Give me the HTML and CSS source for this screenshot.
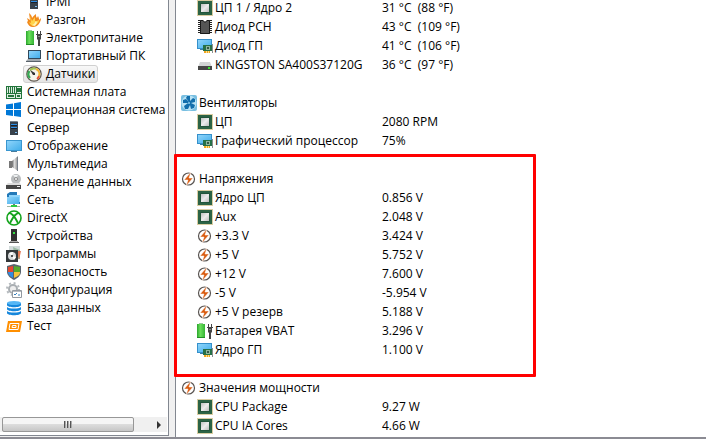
FILE: index.html
```html
<!DOCTYPE html>
<html lang="ru">
<head>
<meta charset="utf-8">
<title>Датчики</title>
<link rel="stylesheet" href="styles.css">
</head>
<body>
<svg class="sprite" aria-hidden="true">
  <defs>
    <linearGradient id="blue" x1="0" y1="0" x2="1" y2="1"><stop offset="0" stop-color="#8ed4fb"/><stop offset="1" stop-color="#43aeea"/></linearGradient>
    <linearGradient id="green" x1="0" x2="1"><stop offset="0" stop-color="#2aa52c"/><stop offset=".4" stop-color="#6be05c"/><stop offset="1" stop-color="#35b335"/></linearGradient>
    <linearGradient id="metal" x1="0" y1="0" x2="1" y2="1"><stop offset="0" stop-color="#c2c2c2"/><stop offset=".5" stop-color="#ececec"/><stop offset="1" stop-color="#bcbcbc"/></linearGradient>
    <linearGradient id="speaker" x1="0" x2="1"><stop offset="0" stop-color="#666"/><stop offset=".4" stop-color="#ddd"/><stop offset="1" stop-color="#888"/></linearGradient>
  </defs>
  <symbol id="i-server" viewBox="0 0 16 16"><path d="M4 1h7l1 1v13H4z" fill="#38424c"/><path d="M4 1h7v1H4z" fill="#77818a"/><path d="M5 4h6v1H5zM5 7h6v1H5z" fill="#2d8ee6"/><path d="M5 5h6v1H5zM5 8h6v1H5z" fill="#18202a"/><path d="M9 12h2v1H9z" fill="#7ec0f4"/></symbol>
  <symbol id="i-fire" viewBox="0 0 16 16"><path d="M3 1c2 2 3 3 3 5 1-1 2-3 4-4 0 2 0 3 1 4l1-2c1 2 1 3 1 4l2-2c0 4-3 9-8 9-3 0-5-2-6-5l1-1-1-3 3 2z" fill="#f28a1c"/><path d="M4 4l2 5 3-4v4l2 0 2-1c0 3-3 5-5 6-3 0-4-2-5-4l2 1z" fill="#ffd34a"/><path d="M10 9l1 2-2 3-3-1 2-1z" fill="#fff2b5"/></symbol>
  <symbol id="i-power" viewBox="0 0 16 16"><path d="M2 0h4v2H2z" fill="#9bc79b"/><path d="M0 1h8v14H0z" fill="url(#green)"/><path d="M0 14h8v1H0z" fill="#218d25"/><path d="M11 1h1v3h-1zM14 1h1v3h-1zM10 4h6v1h-6zM11 5h4v4l-1 1h-2l-1-1zM12 10h2v6h-2z" fill="#444"/><path d="M12 6h2v1h-2z" fill="#888"/></symbol>
  <symbol id="i-laptop" viewBox="0 0 16 16"><path d="M2 2h13v9H2z" fill="#31485a"/><path d="M3 3h11v7H3z" fill="url(#blue)"/><path d="M2 11h12l1 2H0z" fill="#a1a8ad"/><path d="M0 13h15v1H0z" fill="#59636b"/></symbol>
  <symbol id="i-gauge" viewBox="0 0 16 16"><circle cx="8" cy="8" r="7.2" fill="#f6f3e9" stroke="#5c554c" stroke-width="1.2"/><path d="M4 12a5.5 5.5 0 0 1-.5-7" fill="none" stroke="#35a853" stroke-width="2.2"/><path d="M4 4.300a5.500 5.500 0 0 1 6-1.400" fill="none" stroke="#a3c653" stroke-width="2"/><path d="M10 3a5.500 5.500 0 0 1 3 7" fill="none" stroke="#f3b42f" stroke-width="2"/><path d="M13 10a5 5 0 0 1-2 3" fill="none" stroke="#e55332" stroke-width="2"/><path d="M4 4l5 3v2H7z" fill="#333"/></symbol>
  <symbol id="i-board" viewBox="0 0 16 16"><path d="M0 2h16v13H0z" fill="#22753b"/><path d="M1 3h7v6H1zM9 3h1v6H9zM11 3h4v1h-4zM11 8h4v1h-4zM1 10h8v4H1zM10 10h5v4h-5z" fill="#dfebe2"/><path d="M2 3h1v6H2zM4 3h1v6H4zM6 3h1v6H6zM2 11h6v2H2zM11 11h3v2h-3z" fill="#22753b"/></symbol>
  <symbol id="i-windows" viewBox="0 0 16 16"><path d="M0 2.500L7 1.500V7H0zM8 1.300L15 0v7H8zM0 8h7v6L0 13zM8 8h7v7l-7-1z" fill="#0078d7"/></symbol>
  <symbol id="i-display" viewBox="0 0 16 16"><path d="M0 2h16v11H0z" fill="#3996cf"/><path d="M1 3h14v9H1z" fill="url(#blue)"/><path d="M5 13h6v1H5z" fill="#477c9c"/></symbol>
  <symbol id="i-speaker" viewBox="0 0 16 16"><path d="M3 5h3v7H3z" fill="#777"/><path d="M6 5l6-5v15l-6-4z" fill="url(#speaker)"/><path d="M11 1h1v14h-1z" fill="#77808a"/></symbol>
  <symbol id="i-storage" viewBox="0 0 16 16"><circle cx="10" cy="5" r="5" fill="#b9bcbe"/><path d="M10 5L7 1h5z" fill="#edf0f1"/><circle cx="10" cy="5" r="1.500" fill="#fff" stroke="#888"/><path d="M2 9h12l1 2H0z" fill="#ddd"/><path d="M0 11h15v4H0z" fill="#454545"/><path d="M11 12h3v1h-3z" fill="#eee"/></symbol>
  <symbol id="i-network" viewBox="0 0 16 16"><path d="M1 2l3-2h7v3h3v9H1z" fill="#2379b8"/><path d="M3 3h11v7H3z" fill="#8ed4fb"/><path d="M1 5h12v7H1z" fill="url(#blue)"/><path d="M7 12h2v2H7z" fill="#777"/><path d="M1 14h13v1H1z" fill="#a0b5a0"/><path d="M5 13h6v2H5z" fill="#2bca43"/></symbol>
  <symbol id="i-xbox" viewBox="0 0 16 16"><circle cx="8" cy="8" r="7" fill="#fff" stroke="#13a31b" stroke-width="1.600"/><path d="M3 3c3 0 6 4 9 10M13 3c-3 0-6 4-9 10" fill="none" stroke="#13a31b" stroke-width="1.800"/></symbol>
  <symbol id="i-device" viewBox="0 0 16 16"><path d="M5 1h6v12H5z" fill="#303030"/><path d="M7 4h2v2H7z" fill="#35e443"/><path d="M4 13h8v1H4z" fill="#aaa"/><path d="M3 14h10v1H3z" fill="#555"/></symbol>
  <symbol id="i-programs" viewBox="0 0 16 16"><path d="M3 0h11v13H3z" fill="#d1dada"/><path d="M7 1l7 3v9H9z" fill="#9bb9a3"/><path d="M11 5h4l-2 9z" fill="#e37955"/><path d="M0 4h12v12H0z" fill="#34383a"/><circle cx="6" cy="10" r="4" fill="#d8dadb"/><path d="M6 10l-3-3 4-1zM6 10l4 1-2 3z" fill="#fff"/><circle cx="6" cy="10" r="1" fill="#222"/></symbol>
  <symbol id="i-shield" viewBox="0 0 16 16"><path d="M8 0l7 2v6c0 3-3 6-7 8-4-2-7-5-7-8V2z" fill="#58636d"/><path d="M7 2v6H2V3z" fill="#e5482f"/><path d="M8 2l6 1v5H8z" fill="#55aa2b"/><path d="M2 8h5v6C4 12 2 11 2 8z" fill="#328be0"/><path d="M8 8h6c0 3-2 4-6 6z" fill="#f6c338"/></symbol>
  <symbol id="i-config" viewBox="0 0 16 16"><circle cx="7" cy="7" r="6" fill="none" stroke="#b4b9bd" stroke-width="2" stroke-dasharray="2 2.700"/><circle cx="7" cy="7" r="4" fill="#eee" stroke="#a9aeb2" stroke-width="2"/><path d="M6.500 8.500h9v7h-9z" fill="#fff" stroke="#9299a0"/><path d="M7 9h8v1H7z" fill="#b7bbc0"/><path d="M8 12l1 1 2-2M12 13h2" fill="none" stroke="#3681bd"/></symbol>
  <symbol id="i-database" viewBox="0 0 16 16"><path d="M1 3v2c0 3 14 3 14 0V3zM1 7v2c0 3 14 3 14 0V7c-2 2-12 2-14 0zM1 11v2c0 3 14 3 14 0v-2c-2 2-12 2-14 0z" fill="#1687dc"/><ellipse cx="8" cy="3" rx="7" ry="2" fill="#55b6f5"/></symbol>
  <symbol id="i-test" viewBox="0 0 16 16"><path d="M2 3h14l-2 11H0z" fill="#ff8f00"/><path d="M4 5.500h9l-1 6H3zM6.500 7.500h3.500v2H6z" fill="none" stroke="#fff"/></symbol>
  <symbol id="i-cpu" viewBox="0 0 16 16"><path d="M.5.500h15v15H.5z" fill="none" stroke="#b59a45" stroke-dasharray="1 1"/><path d="M1 1h14v14H1z" fill="#2c6345"/><path d="M3 3h10v10H3z" fill="#22553b"/><path d="M4 4h8v8H4z" fill="url(#metal)"/></symbol>
  <symbol id="i-chip" viewBox="0 0 16 16"><path d="M3 1h3l2 2 2-2h3v14H3z" fill="#555"/><path d="M2 1v14M14 1v14" fill="none" stroke="#222" stroke-width="2" stroke-dasharray="1 1"/><path d="M3.500 1.500H6l2 2 2-2h2.500v13h-9z" fill="none" stroke="#191919"/></symbol>
  <symbol id="i-gpu" viewBox="0 0 16 16"><path d="M0 1h15v10H0z" fill="#3590cb"/><path d="M1 2h13v8H1z" fill="url(#blue)"/><path d="M3 11h4v1H3z" fill="#3a7ba3"/><path d="M6 7h9v6H6z" fill="#267047"/><path d="M9 8h4v4H9z" fill="#8db59c"/><path d="M10 9h2v2h-2z" fill="#345845"/><path d="M15 6h1v9h-1z" fill="#8a9090"/><path d="M7 13h6v2H7z" fill="#f0a51e"/><path d="M9 13h1v2H9zM11 13h1v2h-1z" fill="#ffe08a"/></symbol>
  <symbol id="i-drive" viewBox="0 0 16 16"><path d="M3 5h10l2 5H1z" fill="#d2d4d5"/><path d="M1 9h14v4H1z" fill="#464646"/><path d="M11 10h2v2h-2z" fill="#36e52e"/></symbol>
  <symbol id="i-fan" viewBox="0 0 16 16"><rect width="16" height="16" rx="2" fill="#79bfe1"/><circle cx="8" cy="8" r="7.500" fill="#b8e2f4"/><path d="M8 7L5 3l1-2h3v5l3-3 2 1v3l-4 1 4 2-1 3-3 1-1-4-2 4-3 0-1-3 4-3-5 0V5l3-1z" fill="#116eac"/><circle cx="8" cy="8" r="1" fill="#8bcdec"/></symbol>
  <symbol id="i-volt" viewBox="0 0 16 16"><circle cx="7.500" cy="8" r="6" fill="#fff" stroke="#5a5552" stroke-width="1.200"/><path d="M10 1L3 9h4l-2 6 7-8H8z" fill="#da5d12" stroke="#fff" stroke-width=".5"/></symbol>
</svg>
<main class="window">
  <nav class="tree" aria-label="Разделы">
    <ul class="tree-list">
      <li class="sub"><a href="#"><svg><use href="#i-server"/></svg>IPMI</a></li>
      <li class="sub"><a href="#"><svg><use href="#i-fire"/></svg>Разгон</a></li>
      <li class="sub"><a href="#"><svg><use href="#i-power"/></svg>Электропитание</a></li>
      <li class="sub"><a href="#"><svg><use href="#i-laptop"/></svg>Портативный ПК</a></li>
      <li class="sub"><a href="#" class="selected" aria-current="page"><svg><use href="#i-gauge"/></svg>Датчики</a></li>
      <li><a href="#"><svg><use href="#i-board"/></svg>Системная плата</a></li>
      <li><a href="#"><svg><use href="#i-windows"/></svg>Операционная система</a></li>
      <li><a href="#"><svg><use href="#i-server"/></svg>Сервер</a></li>
      <li><a href="#"><svg><use href="#i-display"/></svg>Отображение</a></li>
      <li><a href="#"><svg><use href="#i-speaker"/></svg>Мультимедиа</a></li>
      <li><a href="#"><svg><use href="#i-storage"/></svg>Хранение данных</a></li>
      <li><a href="#"><svg><use href="#i-network"/></svg>Сеть</a></li>
      <li><a href="#"><svg><use href="#i-xbox"/></svg>DirectX</a></li>
      <li><a href="#"><svg><use href="#i-device"/></svg>Устройства</a></li>
      <li><a href="#"><svg><use href="#i-programs"/></svg>Программы</a></li>
      <li><a href="#"><svg><use href="#i-shield"/></svg>Безопасность</a></li>
      <li><a href="#"><svg><use href="#i-config"/></svg>Конфигурация</a></li>
      <li><a href="#"><svg><use href="#i-database"/></svg>База данных</a></li>
      <li><a href="#"><svg><use href="#i-test"/></svg>Тест</a></li>
    </ul>
    <div class="scrollbar">
      <div class="thumb"><i></i><i></i><i></i></div>
      <button class="arrow" type="button" aria-label="Прокрутить вправо"></button>
    </div>
  </nav>
  <section class="details">
    <table>
      <tbody>
        <tr><th scope="row"><svg><use href="#i-cpu"/></svg>ЦП 1 / Ядро 2</th><td>31 °C&nbsp; (88 °F)</td></tr>
        <tr><th scope="row"><svg><use href="#i-chip"/></svg>Диод PCH</th><td>43 °C&nbsp; (109 °F)</td></tr>
        <tr><th scope="row"><svg><use href="#i-gpu"/></svg>Диод ГП</th><td>41 °C&nbsp; (106 °F)</td></tr>
        <tr><th scope="row"><svg><use href="#i-drive"/></svg>KINGSTON SA400S37120G</th><td>36 °C&nbsp; (97 °F)</td></tr>
        <tr class="spacer"><td colspan="2"></td></tr>
      </tbody>
      <tbody>
        <tr class="group"><th colspan="2" scope="rowgroup"><svg><use href="#i-fan"/></svg>Вентиляторы</th></tr>
        <tr><th scope="row"><svg><use href="#i-cpu"/></svg>ЦП</th><td>2080 RPM</td></tr>
        <tr><th scope="row"><svg><use href="#i-gpu"/></svg>Графический процессор</th><td>75%</td></tr>
        <tr class="spacer"><td colspan="2"></td></tr>
      </tbody>
      <tbody>
        <tr class="group"><th colspan="2" scope="rowgroup"><svg><use href="#i-volt"/></svg>Напряжения</th></tr>
        <tr><th scope="row"><svg><use href="#i-cpu"/></svg>Ядро ЦП</th><td>0.856 V</td></tr>
        <tr><th scope="row"><svg><use href="#i-cpu"/></svg>Aux</th><td>2.048 V</td></tr>
        <tr><th scope="row"><svg><use href="#i-volt"/></svg>+3.3 V</th><td>3.424 V</td></tr>
        <tr><th scope="row"><svg><use href="#i-volt"/></svg>+5 V</th><td>5.752 V</td></tr>
        <tr><th scope="row"><svg><use href="#i-volt"/></svg>+12 V</th><td>7.600 V</td></tr>
        <tr><th scope="row"><svg><use href="#i-volt"/></svg>-5 V</th><td>-5.954 V</td></tr>
        <tr><th scope="row"><svg><use href="#i-volt"/></svg>+5 V резерв</th><td>5.188 V</td></tr>
        <tr><th scope="row"><svg><use href="#i-power"/></svg>Батарея VBAT</th><td>3.296 V</td></tr>
        <tr><th scope="row"><svg><use href="#i-gpu"/></svg>Ядро ГП</th><td>1.100 V</td></tr>
        <tr class="spacer"><td colspan="2"></td></tr>
      </tbody>
      <tbody>
        <tr class="group"><th colspan="2" scope="rowgroup"><svg><use href="#i-volt"/></svg>Значения мощности</th></tr>
        <tr><th scope="row"><svg><use href="#i-cpu"/></svg>CPU Package</th><td>9.27 W</td></tr>
        <tr><th scope="row"><svg><use href="#i-cpu"/></svg>CPU IA Cores</th><td>4.66 W</td></tr>
      </tbody>
    </table>
    <div class="highlight"></div>
  </section>
</main>
</body>
</html>
```
FILE: styles.css
```css
* {
  box-sizing: border-box;
}

body {
  margin: 0;
  background: #f0f0f0;
  color: #000;
  font: 12px/18px "Open Sans", "Noto Sans", sans-serif;
}

.sprite {
  position: absolute;
  width: 0;
  height: 0;
}

.window {
  display: flex;
  gap: 6px;
  height: 100vh;
  overflow: hidden;
  border-bottom: 2px solid #8b8b93;
}

.tree {
  display: flex;
  flex: 0 0 169px;
  flex-direction: column;
  margin-bottom: 1px;
  padding-bottom: 3px;
  background: #fff;
  border-right: 1px solid #828790;
  border-bottom: 1px solid #828790;
}

.tree-list {
  flex: 1;
  min-height: 0;
  margin: -7px 0 0;
  padding: 0 0 0 5px;
  list-style: none;
}

.tree-list .sub {
  padding-left: 18px;
}

.tree-list li {
  display: flex;
  height: 18px;
}

.tree-list a {
  display: flex;
  align-items: center;
  gap: 5px;
  height: 18px;
  border: 1px solid transparent;
  border-radius: 3px;
  color: inherit;
  text-decoration: none;
  white-space: nowrap;
}

.tree-list .sub a {
  gap: 4px;
  padding: 0 2px;
}

.tree-list .selected {
  background: linear-gradient(#f8f8f8, #e5e5e5);
  border-color: #d0d0d0;
}

svg {
  flex: none;
  width: 16px;
  height: 16px;
}

.scrollbar {
  display: flex;
  align-items: stretch;
  height: 15px;
  margin-right: 1px;
  padding-left: 2px;
  background: #f0f0f0;
}

.thumb {
  display: flex;
  flex: 1;
  align-items: center;
  justify-content: center;
  gap: 1px;
  background: linear-gradient(#f5f5f5 0 45%, #dcdcdc 50%, #c6c6c6);
  border: 1px solid #979797;
  border-radius: 2px;
}

.thumb i {
  width: 2px;
  height: 7px;
  background: linear-gradient(90deg, #555 50%, #aaa 50%);
}

.arrow {
  display: flex;
  align-items: center;
  justify-content: flex-end;
  width: 33px;
  padding: 0 6px 0 0;
  background: none;
  border: 0;
}

.arrow::after {
  content: "";
  border: 4px solid transparent;
  border-right: 0;
  border-left-color: #333;
}

.details {
  position: relative;
  flex: 1;
  min-width: 0;
  background: #fff;
  border-left: 1px solid #828790;
}

table {
  width: 100%;
  margin-top: -2px;
  border-collapse: collapse;
  table-layout: fixed;
}

tr {
  height: 19px;
}

th,
td {
  height: 19px;
  padding: 0;
  font-weight: 400;
  line-height: 19px;
  text-align: left;
  vertical-align: top;
  white-space: nowrap;
}

th {
  width: 206px;
  padding-left: 21px;
}

.group th {
  padding-left: 5px;
}

th svg {
  margin: 2px 2px 0 0;
  vertical-align: top;
}

.highlight {
  position: absolute;
  top: 154px;
  left: -2px;
  width: 362px;
  height: 223px;
  border: 3px solid #f00;
  border-radius: 1px;
  pointer-events: none;
}
```
